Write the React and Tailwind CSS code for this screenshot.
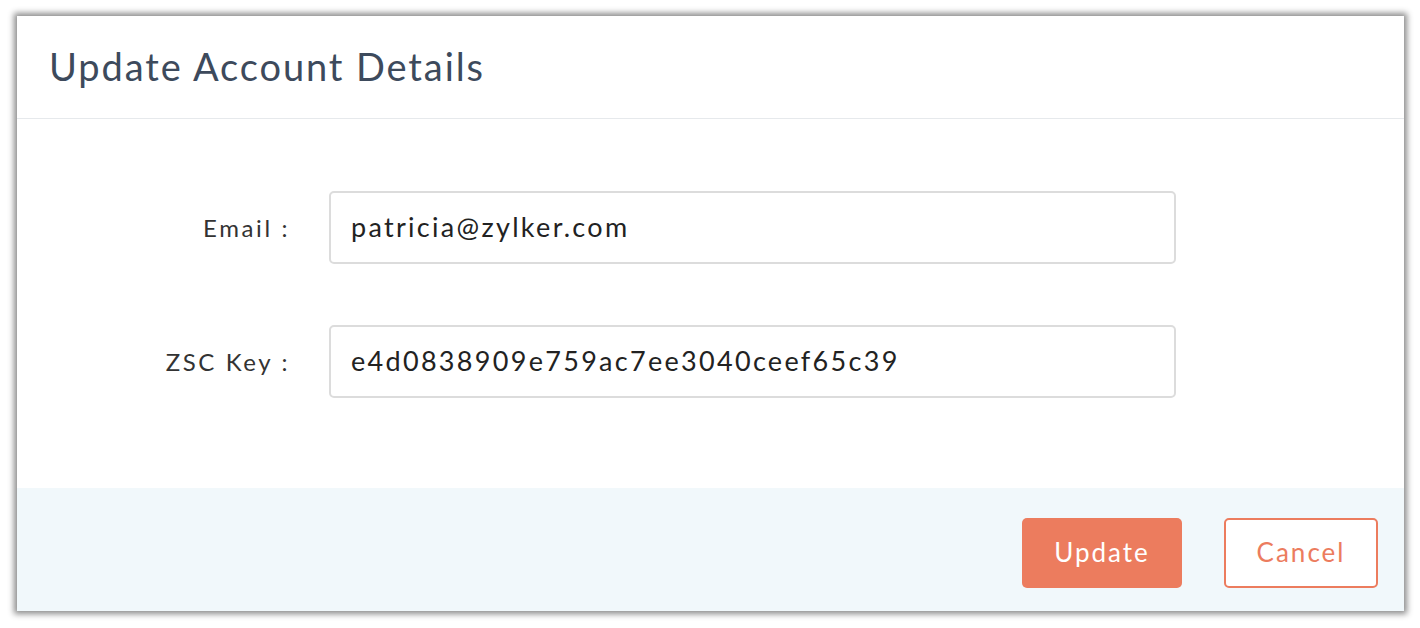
import React from 'react';

const fields = [
  { label: 'Email :', value: 'patricia@zylker.com' },
  { label: 'ZSC Key :', value: 'e4d0838909e759ac7ee3040ceef65c39' },
];

export default function App() {
  return (
    <div className="w-[1420px] h-[628px] bg-white pt-[16px] pl-[17px] font-['Lato','Open_Sans',sans-serif]">
      <div className="w-[1387px] h-[595px] bg-white flex flex-col shadow-[0_0_6px_3px_rgba(0,0,0,0.45)]">
        {/* Header */}
        <div className="h-[103px] border-b border-[#e6e9ec] flex items-center pl-[32px] pb-[2px]">
          <h2 className="text-[38px] text-[#3d4a5c] tracking-[1.9px]">Update Account Details</h2>
        </div>

        {/* Body */}
        <div className="flex-1 flex flex-col gap-[61px] pt-[72px]">
          {fields.map((f) => (
            <div key={f.label} className="flex items-center">
              <label className="w-[273px] text-right text-[24px] text-[#333] tracking-[2.6px]">{f.label}</label>
              <div className="ml-[39px] w-[847px] h-[73px] border-2 border-[#dcdcdc] rounded-[5px] flex items-center pl-[20px]">
                <span className="text-[27px] text-[#222] tracking-[2.3px]">{f.value}</span>
              </div>
            </div>
          ))}
        </div>

        {/* Footer */}
        <div className="h-[123px] bg-[#f1f8fb] flex items-center justify-end gap-[42px] pr-[26px] pt-[6px]">
          <button className="w-[160px] h-[70px] rounded-[5px] bg-[#ec7c5e] text-white text-[26px] tracking-[2px]">Update</button>
          <button className="w-[154px] h-[70px] rounded-[5px] border-2 border-[#ec7c5e] bg-white text-[#ec7c5e] text-[26px] tracking-[2px]">Cancel</button>
        </div>
      </div>
    </div>
  );
}
